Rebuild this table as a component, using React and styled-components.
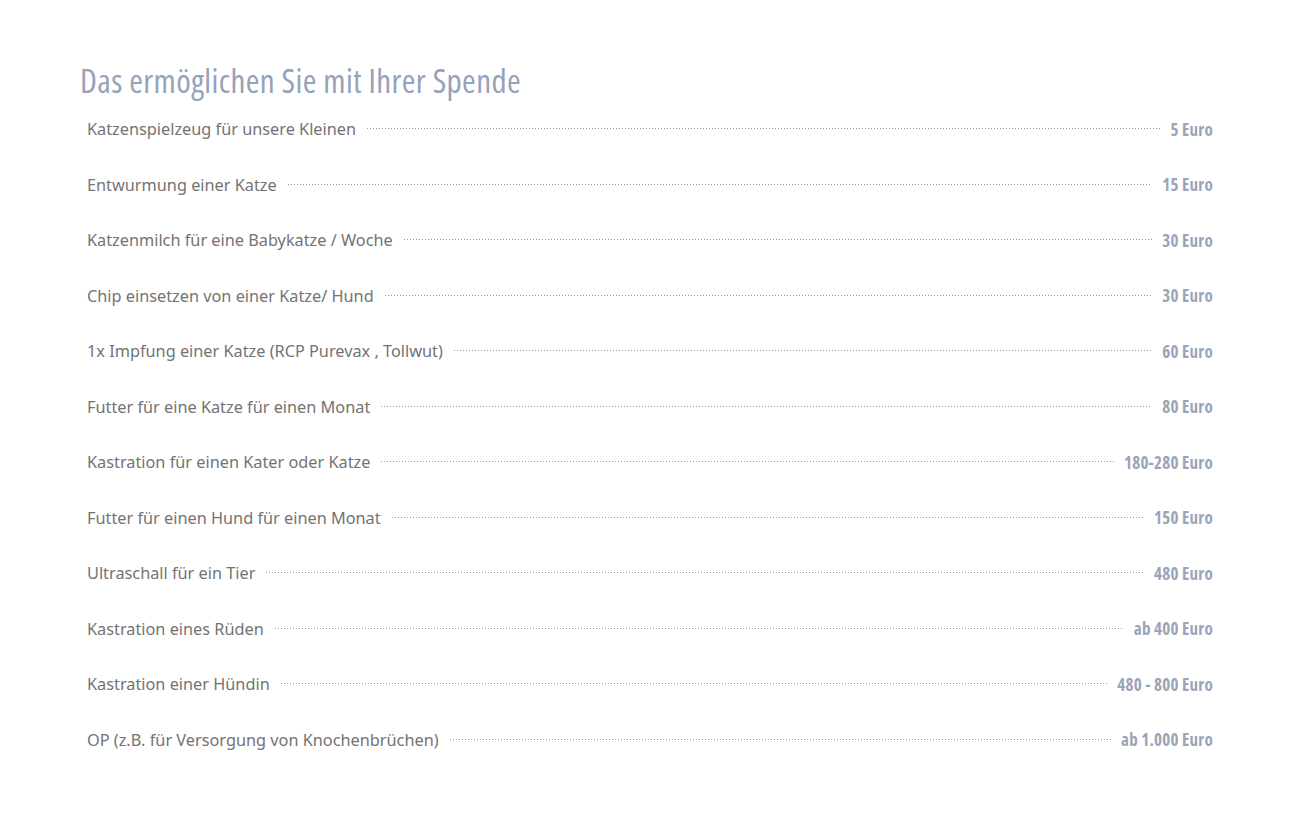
import React from "react"
import styled, { createGlobalStyle } from "styled-components"

const items = [
  ["Katzenspielzeug für unsere Kleinen", "5 Euro"],
  ["Entwurmung einer Katze", "15 Euro"],
  ["Katzenmilch für eine Babykatze / Woche", "30 Euro"],
  ["Chip einsetzen von einer Katze/ Hund", "30 Euro"],
  ["1x Impfung einer Katze (RCP Purevax , Tollwut)", "60 Euro"],
  ["Futter für eine Katze für einen Monat", "80 Euro"],
  ["Kastration für einen Kater oder Katze", "180-280 Euro"],
  ["Futter für einen Hund für einen Monat", "150 Euro"],
  ["Ultraschall für ein Tier", "480 Euro"],
  ["Kastration eines Rüden", "ab 400 Euro"],
  ["Kastration einer Hündin", "480 - 800 Euro"],
  ["OP (z.B. für Versorgung von Knochenbrüchen)", "ab 1.000 Euro"],
]

const App = () => (
  <>
    <GlobalStyle />
    <Page>
      <Heading>Das ermöglichen Sie mit Ihrer Spende</Heading>
      <List>
        {items.map(([label, price]) => (
          <Row key={label}>
            <Label>{label}</Label>
            <Dots />
            <Price>{price}</Price>
          </Row>
        ))}
      </List>
    </Page>
  </>
)

export default App

const GlobalStyle = createGlobalStyle`
  body {
    margin: 0;
    background: #ffffff;
  }
`

const Page = styled.div`
  width: 1133px;
  padding: 62px 0 0 80px;
`

const Heading = styled.h1`
  margin: 0 0 18px;
  font-family: "Open Sans", sans-serif;
  font-stretch: 75%;
  font-weight: 400;
  font-size: 33px;
  letter-spacing: 0.4px;
  line-height: 38px;
  color: #95a2ba;
`

const List = styled.div`
  display: flex;
  flex-direction: column;
  padding-left: 7px;
  gap: 33.5px;
`

const Row = styled.div`
  display: flex;
  align-items: center;
  height: 22px;
`

const Label = styled.span`
  font-family: "Noto Sans", "Open Sans", sans-serif;
  font-size: 16.3px;
  color: #737373;
  white-space: nowrap;
`

const Dots = styled.span`
  flex: 1;
  height: 2px;
  margin: 0 10px 0 11px;
  background-image: linear-gradient(to right, #9c9c9c 1px, transparent 1px);
  background-size: 3px 1px;
  background-repeat: repeat-x;
`

const Price = styled.span`
  font-family: "Open Sans", sans-serif;
  font-stretch: 75%;
  font-weight: 700;
  font-size: 17px;
  letter-spacing: 0.25px;
  color: #9aa4b8;
  white-space: nowrap;
`
